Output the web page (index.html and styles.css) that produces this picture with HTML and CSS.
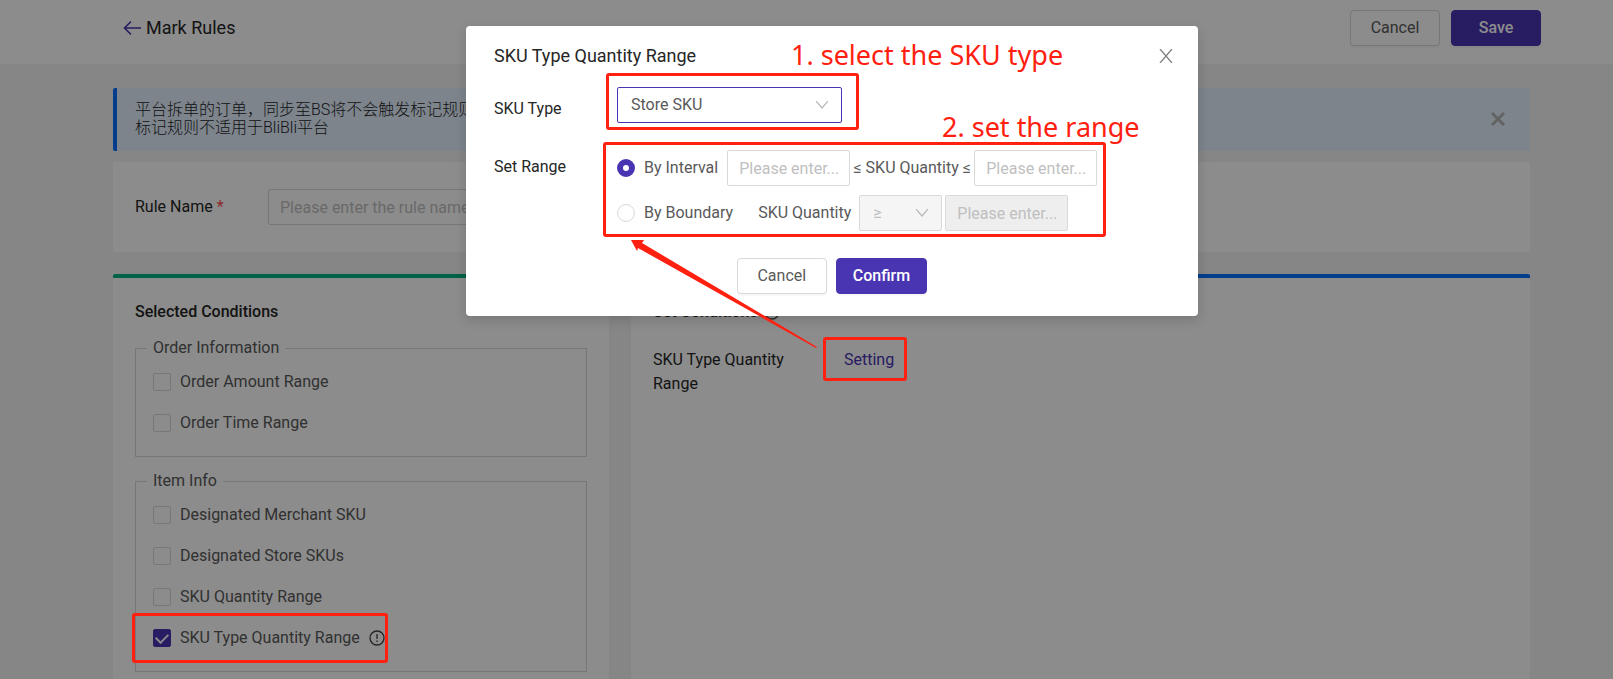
FILE: index.html
```html
<!DOCTYPE html>
<html lang="en">
<head>
<meta charset="utf-8">
<title>Mark Rules</title>
<link rel="stylesheet" href="styles.css">
</head>
<body>
<div class="page">
  <header class="topbar">
    <h1 class="topbar-title">
      <svg class="back-icon" viewBox="0 0 18 16" aria-hidden="true"><path d="M18 8H1.500M8 1.500L1.500 8L8 14.500"/></svg>
      Mark Rules
    </h1>
    <div class="topbar-actions">
      <button class="btn" type="button">Cancel</button>
      <button class="btn btn-primary" type="button">Save</button>
    </div>
  </header>

  <main class="content">
    <section class="notice" lang="zh">
      <p class="notice-text">平台拆单的订单，同步至BS将不会触发标记规则<br>标记规则不适用于BliBli平台</p>
      <button class="icon-btn notice-close" type="button" aria-label="Close notice">
        <svg viewBox="0 0 14 14"><path d="M1 1l12 12M13 1L1 13"/></svg>
      </button>
    </section>

    <section class="card rule-card">
      <label class="rule-label" for="rule-name">Rule Name <span class="required">*</span></label>
      <input class="field rule-input" id="rule-name" type="text" placeholder="Please enter the rule name">
    </section>

    <div class="panels">
      <section class="card panel panel-green">
        <h2 class="panel-title">Selected Conditions</h2>
        <fieldset class="group">
          <legend>Order Information</legend>
          <label class="check"><input type="checkbox">Order Amount Range</label>
          <label class="check"><input type="checkbox">Order Time Range</label>
        </fieldset>
        <fieldset class="group">
          <legend>Item Info</legend>
          <label class="check"><input type="checkbox">Designated Merchant SKU</label>
          <label class="check"><input type="checkbox">Designated Store SKUs</label>
          <label class="check"><input type="checkbox">SKU Quantity Range</label>
          <label class="check"><input type="checkbox" checked>SKU Type Quantity Range
            <svg class="info-icon" viewBox="0 0 16 16" aria-hidden="true"><circle cx="8" cy="8" r="7"/><path d="M8 4v5M8 10.500v1.500"/></svg>
          </label>
        </fieldset>
      </section>
      <section class="card panel panel-blue">
        <h2 class="panel-title">Set Conditions
          <svg class="info-icon" viewBox="0 0 16 16" aria-hidden="true"><circle cx="8" cy="8" r="7"/><path d="M8 4v5M8 10.500v1.500"/></svg>
        </h2>
        <div class="condition">
          <span class="condition-name">SKU Type Quantity Range</span>
          <a class="condition-link" href="#">Setting</a>
        </div>
      </section>
    </div>
  </main>
</div>

<div class="mask">
  <div class="modal" role="dialog" aria-labelledby="modal-title">
    <div class="modal-head">
      <h2 class="modal-title" id="modal-title">SKU Type Quantity Range</h2>
      <button class="icon-btn modal-close" type="button" aria-label="Close">
        <svg viewBox="0 0 14 14"><path d="M1 0l12 14M13 0L1 14"/></svg>
      </button>
    </div>
    <div class="form-row">
      <label class="form-label" for="sku-type">SKU Type</label>
      <div class="select-wrap type-select">
        <select class="field select-active" id="sku-type"><option>Store SKU</option></select>
        <svg class="chevron" viewBox="0 0 12 8" aria-hidden="true"><path d="M0 0l6 7 6-7"/></svg>
      </div>
    </div>
    <div class="form-row form-row-range">
      <span class="form-label">Set Range</span>
      <div class="range-options">
        <div class="range-line">
          <label class="radio"><input type="radio" name="range" checked>By Interval</label>
          <input class="field num-input" type="text" placeholder="Please enter..." aria-label="Minimum quantity">
          <span class="between">≤ SKU Quantity ≤</span>
          <input class="field num-input" type="text" placeholder="Please enter..." aria-label="Maximum quantity">
        </div>
        <div class="range-line">
          <label class="radio"><input type="radio" name="range">By Boundary</label>
          <label class="boundary-label" for="operator">SKU Quantity</label>
          <div class="select-wrap operator-select">
            <select class="field" id="operator" disabled><option>≥</option></select>
            <svg class="chevron" viewBox="0 0 12 8" aria-hidden="true"><path d="M0 0l6 7 6-7"/></svg>
          </div>
          <input class="field num-input" type="text" placeholder="Please enter..." aria-label="Boundary quantity" disabled>
        </div>
      </div>
    </div>
    <div class="modal-actions">
      <button class="btn" type="button">Cancel</button>
      <button class="btn btn-primary" type="button">Confirm</button>
    </div>
  </div>
</div>

<div class="notes">
  <span class="note-box box-type"></span>
  <span class="note-box box-range"></span>
  <span class="note-box box-setting"></span>
  <span class="note-box box-check"></span>
  <span class="note-text text-type">1. select the SKU type</span>
  <span class="note-text text-range">2. set the range</span>
  <svg class="note-arrow" viewBox="0 0 190 112" aria-hidden="true"><path d="M1 1L14 1L12 4L187 108L186 109L8 9L7 12Z"/></svg>
</div>
</body>
</html>
```
FILE: styles.css
```css
* { box-sizing: border-box; }
body {
  margin: 0;
  font: 16px/24px Roboto, "Noto Sans CJK SC", sans-serif;
  color: #595959;
  background: #f5f5f5;
}
h1, h2, p { margin: 0; }
button, input, select { font: inherit; color: inherit; }

.page { height: 100vh; overflow: hidden; }
.topbar {
  display: flex;
  justify-content: space-between;
  align-items: flex-start;
  height: 64px;
  padding: 10px 72px 0 123px;
  background: #fff;
}
.topbar-title {
  display: flex;
  align-items: center;
  gap: 5px;
  height: 36px;
  font-size: 18px;
  font-weight: 400;
  color: #262626;
}
.back-icon { width: 18px; height: 16px; fill: none; stroke: #4934b2; stroke-width: 1.6; }
.topbar-actions { display: flex; gap: 11px; }
.btn {
  min-width: 90px;
  height: 36px;
  padding: 0 16px;
  border: 1px solid #d9d9d9;
  border-radius: 4px;
  background: #fff;
  color: #595959;
  box-shadow: 0 2px 1px rgba(0, 0, 0, .03);
}
.btn-primary {
  border-color: #4934b2;
  background: #4934b2;
  color: #fff;
  font-weight: 500;
}
.icon-btn { display: flex; padding: 0; border: 0; background: none; }
.icon-btn svg { width: 14px; height: 14px; fill: none; stroke: currentColor; }

.content { padding: 24px 83px 0 113px; }
.notice {
  display: flex;
  justify-content: space-between;
  align-items: center;
  margin-bottom: 11px;
  padding: 13px 25px 14px 18px;
  border-left: 4px solid #086fff;
  border-radius: 2px;
  background: #e4f0ff;
}
.notice-text { line-height: 18px; color: #1f1f1f; font-weight: 300; }
.notice-close { color: #b5b5b5; stroke-width: 3; }
.card { border-radius: 2px; background: #fff; }
.rule-card { display: flex; align-items: center; height: 90px; padding: 0 22px; }
.rule-label { width: 133px; color: #262626; }
.required { color: #ff4d4f; }
.field {
  height: 36px;
  padding: 0 11px;
  border: 1px solid #d9d9d9;
  border-radius: 2px;
  background: #fff;
}
.field::placeholder { color: #bfbfbf; opacity: 1; }
.rule-input { width: 400px; }

.panels {
  display: grid;
  grid-template-columns: 16fr 29fr;
  gap: 22px;
  margin-top: 22px;
}
.panel { min-height: 440px; padding: 22px; border-top: 4px solid; }
.panel-green { border-top-color: #00b383; }
.panel-blue { border-top-color: #086fff; }
.panel-title {
  display: flex;
  align-items: center;
  gap: 6px;
  font-size: 16px;
  font-weight: 500;
  color: #262626;
}
.group {
  display: grid;
  gap: 17px;
  margin: 12px 0 0;
  padding: 10px 17px 21px;
  border: 1px solid #d9d9d9;
}
.group legend { margin-left: -6px; padding: 0 6px; }
.check { display: flex; align-items: center; gap: 9px; }
.check input, .radio input {
  appearance: none;
  flex: none;
  width: 18px;
  height: 18px;
  margin: 0;
  border: 1px solid #d9d9d9;
  border-radius: 2px;
  background: #fff;
}
.check input:checked {
  display: grid;
  place-content: center;
  border-color: #4934b2;
  background: #4934b2;
}
.check input:checked::before {
  content: "";
  width: 10px;
  height: 6px;
  margin-bottom: 3px;
  border: solid #fff;
  border-width: 0 0 2px 2px;
  transform: rotate(-45deg);
}
.info-icon { width: 16px; height: 16px; fill: none; stroke: #434343; stroke-width: 1.3; }
.condition { display: flex; gap: 40px; margin-top: 24px; }
.condition-name { width: 151px; color: #262626; }
.condition-link { color: #4934b2; text-decoration: none; }

.mask {
  position: absolute;
  inset: 0;
  display: flex;
  justify-content: center;
  align-items: flex-start;
  padding: 26px 0 0 51px;
  background: rgba(0, 0, 0, .45);
}
.modal {
  width: 732px;
  padding: 18px 28px 22px;
  border-radius: 4px;
  background: #fff;
  box-shadow: 0 4px 12px rgba(0, 0, 0, .15);
}
.modal-head { display: flex; justify-content: space-between; align-items: center; }
.modal-title { font-size: 18px; font-weight: 400; color: #262626; }
.modal-close { margin-right: -3px; color: #7f7f7f; stroke-width: 1.3; }
.form-row { display: flex; align-items: flex-start; margin-top: 19px; }
.form-row-range { margin-top: 27px; }
.form-label { width: 123px; flex: none; padding-top: 10px; color: #262626; }
.form-row-range .form-label { padding-top: 5px; }
.select-wrap { position: relative; }
.select-wrap select { width: 100%; padding: 0 13px; appearance: none; color: #595959; opacity: 1; }
.chevron {
  position: absolute;
  top: 14px;
  right: 14px;
  width: 12px;
  height: 8px;
  fill: none;
  stroke: #b8b8b8;
  stroke-width: 1.2;
}
.type-select { width: 225px; }
.field.select-active { border-color: #4934b2; }
.range-options { display: grid; gap: 9px; }
.range-line { display: flex; align-items: center; }
.radio { display: flex; align-items: center; gap: 9px; }
.radio input { border-radius: 50%; }
.radio input:checked { border: 6px solid #4934b2; }
.num-input { width: 123px; }
.radio + .num-input { margin-left: 9px; }
.between { width: 124px; text-align: center; }
.boundary-label { margin: 0 8px 0 25px; }
.operator-select { width: 83px; margin-right: 3px; }
.operator-select select:disabled { background: #f5f5f5; color: #bfbfbf; }
.num-input:disabled { background: #eee; }
.modal-actions { display: flex; justify-content: center; gap: 9px; margin-top: 27px; }

.notes { position: absolute; inset: 0; overflow: hidden; pointer-events: none; }
.note-box { position: absolute; border: 3px solid #ff2010; border-radius: 3px; }
.box-type { left: 606px; top: 73px; width: 253px; height: 57px; }
.box-range { left: 603px; top: 142px; width: 503px; height: 95px; }
.box-setting { left: 823px; top: 337px; width: 84px; height: 44px; }
.box-check { left: 132px; top: 613px; width: 256px; height: 50px; }
.note-text {
  position: absolute;
  font: 27px/36px "Noto Sans", sans-serif;
  color: #ff2010;
  white-space: nowrap;
}
.text-type { left: 791px; top: 37px; }
.text-range { left: 942px; top: 109px; }
.note-arrow { position: absolute; left: 630px; top: 239px; width: 190px; height: 112px; fill: #ff2010; }
```
